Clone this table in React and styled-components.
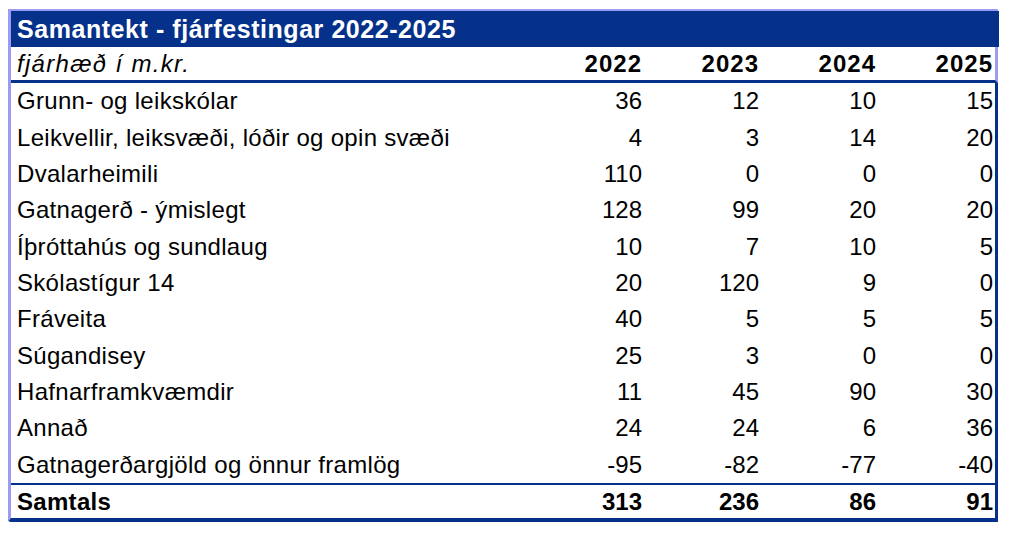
import React from "react";
import styled, { createGlobalStyle } from "styled-components";

const GlobalStyle = createGlobalStyle`
  html, body {
    margin: 0;
    padding: 0;
    background: #ffffff;
  }
  body {
    font-family: "Liberation Sans", Arial, sans-serif;
  }
`;

const NAVY = "#06318a";
const LIGHT = "#9b9bf2";

const rows = [
  ["Grunn- og leikskólar", 36, 12, 10, 15],
  ["Leikvellir, leiksvæði, lóðir og opin svæði", 4, 3, 14, 20],
  ["Dvalarheimili", 110, 0, 0, 0],
  ["Gatnagerð - ýmislegt", 128, 99, 20, 20],
  ["Íþróttahús og sundlaug", 10, 7, 10, 5],
  ["Skólastígur 14", 20, 120, 9, 0],
  ["Fráveita", 40, 5, 5, 5],
  ["Súgandisey", 25, 3, 0, 0],
  ["Hafnarframkvæmdir", 11, 45, 90, 30],
  ["Annað", 24, 24, 6, 36],
  ["Gatnagerðargjöld og önnur framlög", -95, -82, -77, -40],
];

const years = [2022, 2023, 2024, 2025];
const totals = [313, 236, 86, 91];

const Page = styled.div`
  padding: 9px 0 0 8px;
`;

const Table = styled.div`
  width: 990px;
  border-top: 2px solid ${LIGHT};
  border-left: 3px solid ${LIGHT};
  border-bottom: 4px solid ${NAVY};
  border-bottom-left-radius: 3px;
  box-sizing: border-box;
  color: #000;
  font-size: 24px;
  letter-spacing: 0.3px;
`;

const Title = styled.div`
  height: 36px;
  background: ${NAVY};
  color: #fff;
  font-weight: bold;
  font-size: 25px;
  display: flex;
  align-items: center;
  padding-left: 6px;
  margin-right: -1px;
  letter-spacing: 0.55px;
`;

const Row = styled.div`
  display: grid;
  grid-template-columns: 1fr repeat(4, 117px);
  align-items: center;
  height: ${(p) => p.$h}px;
  border-right: 3px solid ${(p) => (p.$light ? LIGHT : NAVY)};
  border-bottom: ${(p) => (p.$line ? `${p.$line}px solid ${NAVY}` : "none")};
  font-weight: ${(p) => (p.$bold ? "bold" : "normal")};
`;

const Body = styled.div`
  display: grid;
  grid-template-rows: repeat(11, 1fr);
  height: 400px;
  border-right: 3px solid ${NAVY};
  border-bottom: 2px solid ${NAVY};
`;

const DataRow = styled.div`
  display: grid;
  grid-template-columns: 1fr repeat(4, 117px);
  align-items: center;
`;

const Label = styled.div`
  padding-left: 6px;
  white-space: nowrap;
  font-style: ${(p) => (p.$italic ? "italic" : "normal")};
  font-weight: ${(p) => (p.$italic ? "normal" : "inherit")};
  letter-spacing: ${(p) => (p.$italic ? "1.3px" : "inherit")};
`;

const Num = styled.div`
  text-align: right;
  padding-right: 2px;
  letter-spacing: ${(p) => (p.$head ? "1px" : "0")};
`;

export default function App() {
  return (
    <Page>
      <GlobalStyle />
      <Table>
        <Title>Samantekt - fjárfestingar 2022-2025</Title>
        <Row $h={33} $light $line={3} $bold>
          <Label $italic>fjárhæð í m.kr.</Label>
          {years.map((y) => (
            <Num key={y} $head>
              {y}
            </Num>
          ))}
        </Row>
        <Body>
          {rows.map(([label, ...vals]) => (
            <DataRow key={label}>
              <Label>{label}</Label>
              {vals.map((v, i) => (
                <Num key={i}>{v}</Num>
              ))}
            </DataRow>
          ))}
        </Body>
        <Row $h={33} $bold>
          <Label>Samtals</Label>
          {totals.map((t, i) => (
            <Num key={i}>{t}</Num>
          ))}
        </Row>
      </Table>
    </Page>
  );
}
